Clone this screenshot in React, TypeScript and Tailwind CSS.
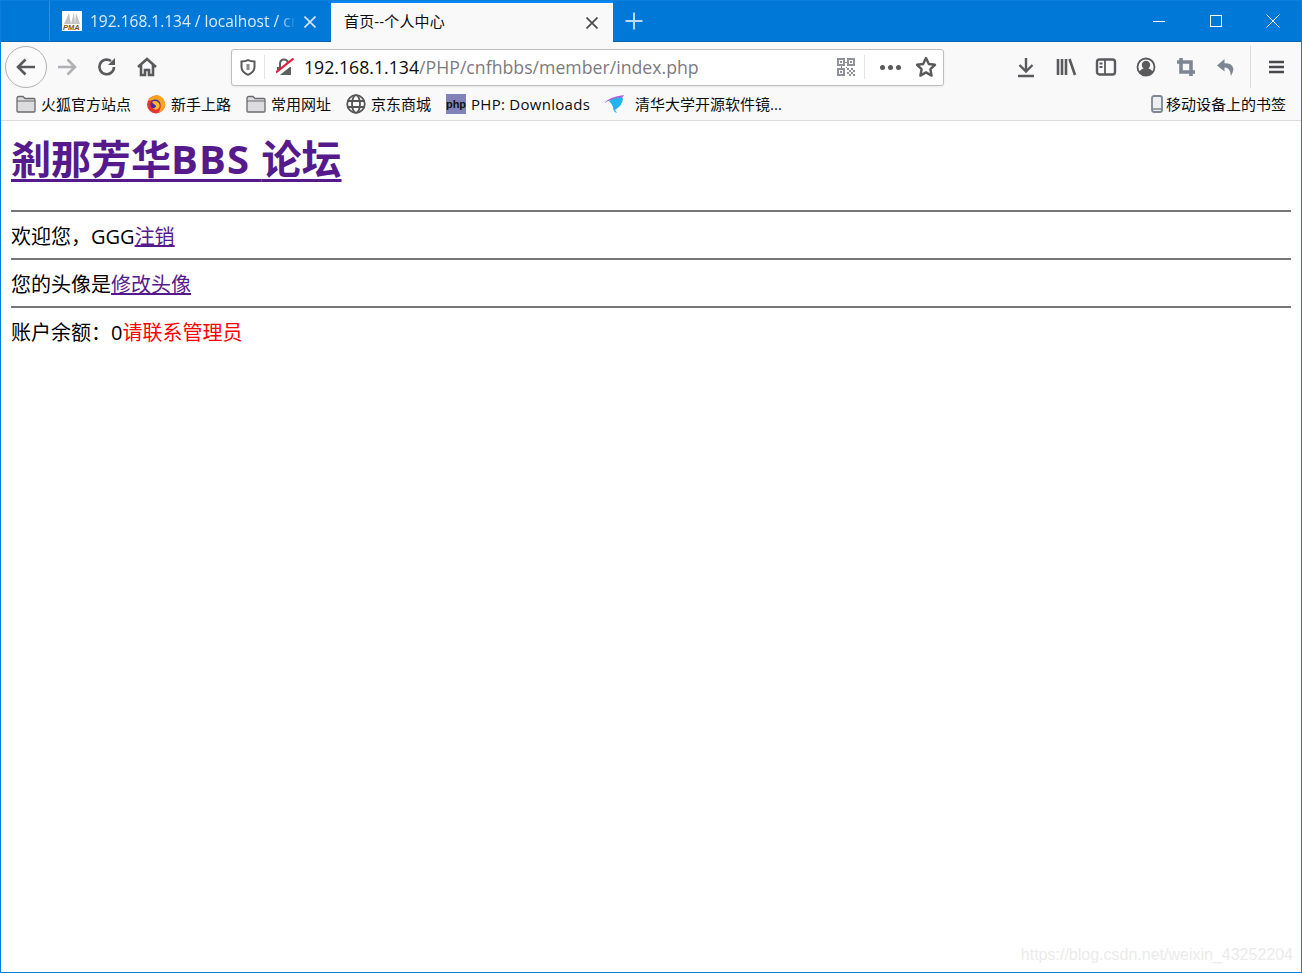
import React from "react";

function Slot({ children }: { children: React.ReactNode }) {
  return <div className="w-10 h-9 flex items-center justify-center shrink-0">{children}</div>;
}

const Ic = ({ children, s = 22, c = "#5a5a5c", sw = 2 }: { children: React.ReactNode; s?: number; c?: string; sw?: number }) => (
  <svg width={s} height={s} viewBox="0 0 22 22" fill="none" stroke={c} strokeWidth={sw}>{children}</svg>
);

function Pma() {
  return (
    <svg width="20" height="20" viewBox="0 0 20 20">
      <rect width="20" height="20" fill="#fff" />
      <path d="M2 13 L7 2 L9 13Z M9 13 L12 1 L13 13Z M13 13 L14 2 L18 13Z" fill="#c4c4c4" />
      <text x="1" y="19" fontSize="7.5" fontWeight="bold" fontStyle="italic" fill="#7a5a10" fontFamily="Liberation Sans">PMA</text>
    </svg>
  );
}

function Folder() {
  return (
    <svg width="20" height="18" viewBox="0 0 20 18">
      <path d="M1 3.5 Q1 1.5 3 1.5 H7 L9 3.5 H18 Q19 3.5 19 5 V16 Q19 17 18 17 H2 Q1 17 1 16Z" fill="#dcdcde" stroke="#6b6b6e" strokeWidth="1.3" />
      <path d="M1 6 H19" stroke="#6b6b6e" strokeWidth="1" />
    </svg>
  );
}

function Firefox() {
  return (
    <svg width="20" height="20" viewBox="0 0 20 20">
      <circle cx="10" cy="10.5" r="9" fill="#e8352c" />
      <path d="M2 7 Q5 1 12 1 Q18 3 19.5 11 Q18 17 12 19 Q16 14 14 10 Q12 6 8 6 Q4 6 2 7Z" fill="#ffa41c" />
      <circle cx="9.5" cy="10.5" r="5" fill="#3f2ea6" />
      <path d="M6 8 Q9 6 12 8 Q15 11 13 14 Q10 17 6.5 14.5 Q10 14 10 11.5 Q8 11 6 8Z" fill="#ffb72a" />
    </svg>
  );
}

function Globe() {
  return (
    <svg width="20" height="20" viewBox="0 0 20 20" fill="none" stroke="#555" strokeWidth="1.8">
      <circle cx="10" cy="10" r="8.8" />
      <ellipse cx="10" cy="10" rx="4" ry="8.8" />
      <path d="M1.5 7 H18.5 M1.5 13 H18.5" />
    </svg>
  );
}

function Bird() {
  return (
    <svg width="21" height="18" viewBox="0 0 21 18">
      <path d="M0 8 Q5 2 20 0 Q18 4 14 5 Q8 4 0 8Z" fill="#a565e0" />
      <path d="M5 6 Q13 2 19 3 Q19 10 11 15 L13 18 Q9 17 9 12 Q8 9 5 6Z" fill="#22b3ee" />
    </svg>
  );
}

function Bm({ icon, text, gap = "gap-[5px]", w, wide = false }: { icon: React.ReactNode; text: string; gap?: string; w: string; wide?: boolean }) {
  return (
    <div className={`flex items-center shrink-0 ${gap} ${w}`}>
      {icon}
      <span className={wide ? "text-[15px] leading-5 text-[#0c0c0d] whitespace-nowrap tracking-[0.28px]" : "text-[15px] leading-5 text-[#0c0c0d] whitespace-nowrap"}>{text}</span>
    </div>
  );
}

function Qr() {
  return (
    <svg width="18" height="18" viewBox="0 0 18 18" fill="#8e9199">
      <path fillRule="evenodd" d="M0 0H8V8H0ZM2 2V6H6V2ZM10 0H18V8H10ZM12 2V6H16V2ZM0 10H8V18H0ZM2 12V16H6V12Z" />
      <rect x="3" y="3" width="2" height="2" /><rect x="13" y="3" width="2" height="2" /><rect x="3" y="13" width="2" height="2" />
      <path d="M9 9h1v1H9zM10 10h2v2h-2zM14 10h2v2h-2zM12 12h2v2h-2zM16 12h2v2h-2zM10 14h2v2h-2zM14 14h2v2h-2zM12 16h2v2h-2zM16 16h2v2h-2zM8 4h2v1H8zM4 8h1v2H4z" />
    </svg>
  );
}

export default function App() {
  return (
    <div className="w-[1302px] h-[973px] border border-[#0a7fdc] flex flex-col relative bg-white overflow-hidden" style={{ fontFamily: '"Open Sans","Noto Sans CJK SC",sans-serif' }}>
      {/* title bar */}
      <div className="h-[41px] bg-[#0078d7] flex shrink-0 border-b border-[#0062b0] box-content -mt-px">
        <div className="w-[49px] shrink-0 border-r border-[#2c8fdf]" />
        <div className="w-[281px] shrink-0 flex items-center pl-[12px] gap-2">
          <Pma />
          <span className="text-[15.5px] text-[#dcecfa] whitespace-nowrap w-[206px] pt-[2px]" style={{ maskImage: "linear-gradient(to right,#000 92%,transparent)" }}>192.168.1.134 / localhost / cr</span>
          <svg width="12" height="12" viewBox="0 0 12 12" stroke="#d6e8f8" strokeWidth="1.6" className="mt-[2px]"><path d="M0.5 0.5 L11.5 11.5 M11.5 0.5 L0.5 11.5" /></svg>
        </div>
        <div className="w-[282px] shrink-0 bg-[#f9f9fa] border-t-[3px] border-[#0a84ff] flex items-center pl-[13px] pr-[15px] justify-between h-[42px]">
          <span className="text-[15px] text-[#0c0c0d] tracking-[0.15px] -mt-[2px]">首页--个人中心</span>
          <svg width="12" height="12" viewBox="0 0 12 12" stroke="#4a4a4c" strokeWidth="1.7"><path d="M0.5 0.5 L11.5 11.5 M11.5 0.5 L0.5 11.5" /></svg>
        </div>
        <div className="w-[41px] flex items-center justify-center shrink-0">
          <svg width="18" height="18" viewBox="0 0 18 18" stroke="#bcdcf5" strokeWidth="2"><path d="M9 0.5 V17.5 M0.5 9 H17.5" /></svg>
        </div>
        <div className="flex-1" />
        <div className="w-[57px] flex items-center justify-center -ml-[1px]">
          <svg width="12" height="12" viewBox="0 0 12 12" stroke="#fff" strokeWidth="1"><path d="M0 6.5 H12" /></svg>
        </div>
        <div className="w-[57px] flex items-center justify-center">
          <svg width="12" height="12" viewBox="0 0 12 12" stroke="#fff" strokeWidth="1" fill="none"><rect x="0.5" y="0.5" width="11" height="11" /></svg>
        </div>
        <div className="w-[57px] flex items-center justify-center">
          <svg width="14" height="14" viewBox="0 0 14 14" stroke="#fff" strokeWidth="1"><path d="M0.5 0.5 L13.5 13.5 M13.5 0.5 L0.5 13.5" /></svg>
        </div>
      </div>

      {/* nav bar */}
      <div className="h-[50px] bg-[#f9f9fa] flex items-center shrink-0 pl-1">
        <div className="w-[42px] h-[42px] rounded-full border border-[#b1b1b3] bg-[#fbfbfb] flex items-center justify-center shrink-0">
          <Ic><path d="M20 11 H3 M10.5 3.5 L3 11 L10.5 18.5" strokeWidth="2.6" /></Ic>
        </div>
        <Slot><Ic c="#b1b1b3"><path d="M2 11 H19 M11.5 3.5 L19 11 L11.5 18.5" strokeWidth="2.6" /></Ic></Slot>
        <Slot><Ic><path d="M18 11 A7.3 7.3 0 1 1 15 5" strokeWidth="2.6" /><path d="M19 2 V9 H12Z" fill="#5a5a5c" stroke="none" /></Ic></Slot>
        <Slot><Ic><path d="M2 11 L11 3 L20 11 M5 9 V19 H9 V14 H13 V19 H17 V9" strokeWidth="2.6" /></Ic></Slot>
        <div className="w-[64px] shrink-0" />
        <div className="w-[713px] h-[37px] shrink-0 rounded-[3px] border border-[#bebebe] bg-white shadow-[0_1px_2px_rgba(0,0,0,0.08)] flex items-center">
          <div className="w-[32px] flex items-center justify-center shrink-0">
            <svg width="16" height="17" viewBox="0 0 16 17" fill="none" stroke="#5a5a5c" strokeWidth="2"><path d="M1.5 2.5 Q5 2.5 8 1.2 Q11 2.5 14.5 2.5 V8 Q14.5 13 8 15.8 Q1.5 13 1.5 8Z" /><path d="M8 5 V11" strokeWidth="3" stroke="#8a8a8c" /></svg>
          </div>
          <div className="w-px h-6 bg-[#e4e4e5] shrink-0" />
          <div className="w-[39px] flex items-center justify-center shrink-0">
            <svg width="18" height="18" viewBox="0 0 18 18" fill="none">
              <path d="M1 9 H15 V17 H1Z" fill="#5f5f61" />
              <path d="M4 9 V6 Q4 1.5 8 1.5 Q12 1.5 12 6 V9" stroke="#5f5f61" strokeWidth="2" />
              <path d="M-1 18 L18 3" stroke="#fff" strokeWidth="4.5" />
              <path d="M0 14.5 L17.5 0.5" stroke="#e0223f" strokeWidth="2.2" />
            </svg>
          </div>
          <div className="flex-1 text-[17.7px] leading-6 text-[#7b7b80] whitespace-nowrap">
            <span className="text-[#0c0c0d]">192.168.1.134</span>/PHP/cnfhbbs/member/index.php
          </div>
          <div className="w-5 mr-[8px] flex justify-center shrink-0"><Qr /></div>
          <div className="w-px h-6 bg-[#e4e4e5] shrink-0" />
          <div className="w-[50px] flex items-center justify-center shrink-0 gap-[3px]">
            <span className="w-[5px] h-[5px] rounded-full bg-[#5a5a5c]" />
            <span className="w-[5px] h-[5px] rounded-full bg-[#5a5a5c]" />
            <span className="w-[5px] h-[5px] rounded-full bg-[#5a5a5c]" />
          </div>
          <div className="w-[28px] flex justify-start shrink-0">
            <Ic><path d="M11 2 L13.8 8 L20 8.8 L15.4 13.2 L16.6 19.6 L11 16.4 L5.4 19.6 L6.6 13.2 L2 8.8 L8.2 8Z" strokeWidth="2.4" strokeLinejoin="round" /></Ic>
          </div>
        </div>
        <div className="w-[62px] shrink-0" />
        <Slot><Ic><path d="M11 2 V15 M4.5 9 L11 15.5 L17.5 9 M3 20 H19" strokeWidth="2.4" /></Ic></Slot>
        <Slot><Ic><path d="M3 3 V19 M7 3 V19 M11 3 V19 M14.5 3 L20 19" strokeWidth="2.6" /></Ic></Slot>
        <Slot><Ic><rect x="2" y="3.5" width="18" height="15" rx="2.5" strokeWidth="2.4" /><path d="M10 3.5 V18.5 M4.5 7.5 H7.5 M4.5 11 H7.5" strokeWidth="1.8" /></Ic></Slot>
        <Slot><Ic sw={1.8}><circle cx="11" cy="11" r="8.5" /><circle cx="11" cy="9" r="3.3" fill="#5a5a5c" /><path d="M5 16.5 Q7 13 11 13 Q15 13 17 16.5 Q14 19 11 19 Q8 19 5 16.5Z" fill="#5a5a5c" /></Ic></Slot>
        <Slot><Ic c="#7d8793"><path d="M6 2 V16 H20 M2 6 H16 V20" strokeWidth="3.6" /></Ic></Slot>
        <Slot><Ic c="#7d8793"><path d="M9.5 3 L2 9.5 L9.5 15.5 V11.5 Q15 11 16 20 Q21 11 15 8 Q12.5 7 9.5 7.2Z" fill="#7d8793" stroke="none" /></Ic></Slot>
        <div className="w-px h-[42px] bg-[#dcdcdd] ml-[4px] shrink-0" />
        <div className="w-[51px] flex items-center justify-center shrink-0">
          <svg width="15" height="14" viewBox="0 0 15 14" stroke="#4a4a4c" strokeWidth="2.4"><path d="M0 2 H15 M0 7 H15 M0 12 H15" /></svg>
        </div>
      </div>

      {/* bookmarks */}
      <div className="h-[29px] bg-[#f9f9fa] border-b border-[#dcdcde] flex items-center shrink-0 pl-[15px] pb-[4px]">
        <Bm icon={<Folder />} text="火狐官方站点" w="w-[130px]" />
        <Bm icon={<Firefox />} text="新手上路" w="w-[100px]" />
        <Bm icon={<Folder />} text="常用网址" w="w-[100px]" />
        <Bm icon={<Globe />} text="京东商城" w="w-[100px]" />
        <Bm wide icon={<div className="w-5 h-5 bg-[#8183b8] flex items-center justify-center text-[11px] font-bold text-[#111] leading-none" style={{ fontFamily: "Liberation Sans" }}>php</div>} text="PHP: Downloads" w="w-[158px]" />
        <Bm icon={<Bird />} text="清华大学开源软件镜..." gap="gap-[10px]" w="w-[300px]" />
        <div className="flex-1" />
        <div className="flex items-center gap-[3px] pr-[15px] shrink-0">
          <svg width="12" height="18" viewBox="0 0 12 18"><rect x="1" y="1" width="10" height="16" rx="2" fill="#eceff2" stroke="#7c8794" strokeWidth="1.8" /><path d="M1 14 H11" stroke="#7c8794" strokeWidth="1.5" /></svg>
          <span className="text-[15px] leading-5 text-[#0c0c0d] whitespace-nowrap">移动设备上的书签</span>
        </div>
      </div>

      {/* page */}
      <div className="flex-1 px-[10px] text-[20px] text-black">
        <div className="h-[89px] pt-[11px]">
          <h1 className="text-[40px] font-bold leading-[54px]">
            <a className="text-[#551a8b] underline decoration-[3px] underline-offset-[5px]">剎那芳华<span className="tracking-[1.1px]">BBS </span>论坛</a>
          </h1>
        </div>
        <hr className="border-0 border-t-2 border-[#777]" />
        <div className="h-[46px] flex items-center pt-[3px]">欢迎您，GGG<a className="text-[#551a8b] underline">注销</a></div>
        <hr className="border-0 border-t-2 border-[#777]" />
        <div className="h-[46px] flex items-center pt-[3px]">您的头像是<a className="text-[#551a8b] underline">修改头像</a></div>
        <hr className="border-0 border-t-2 border-[#777]" />
        <div className="h-[46px] flex items-center pt-[3px]">账户余额：0<span className="text-[#ff0000]">请联系管理员</span></div>
      </div>

      <div className="absolute right-[8px] bottom-[7px] text-[16px] text-[#ebebeb] leading-5" style={{ fontFamily: "Liberation Sans" }}>https://blog.csdn.net/weixin_43252204</div>
    </div>
  );
}
